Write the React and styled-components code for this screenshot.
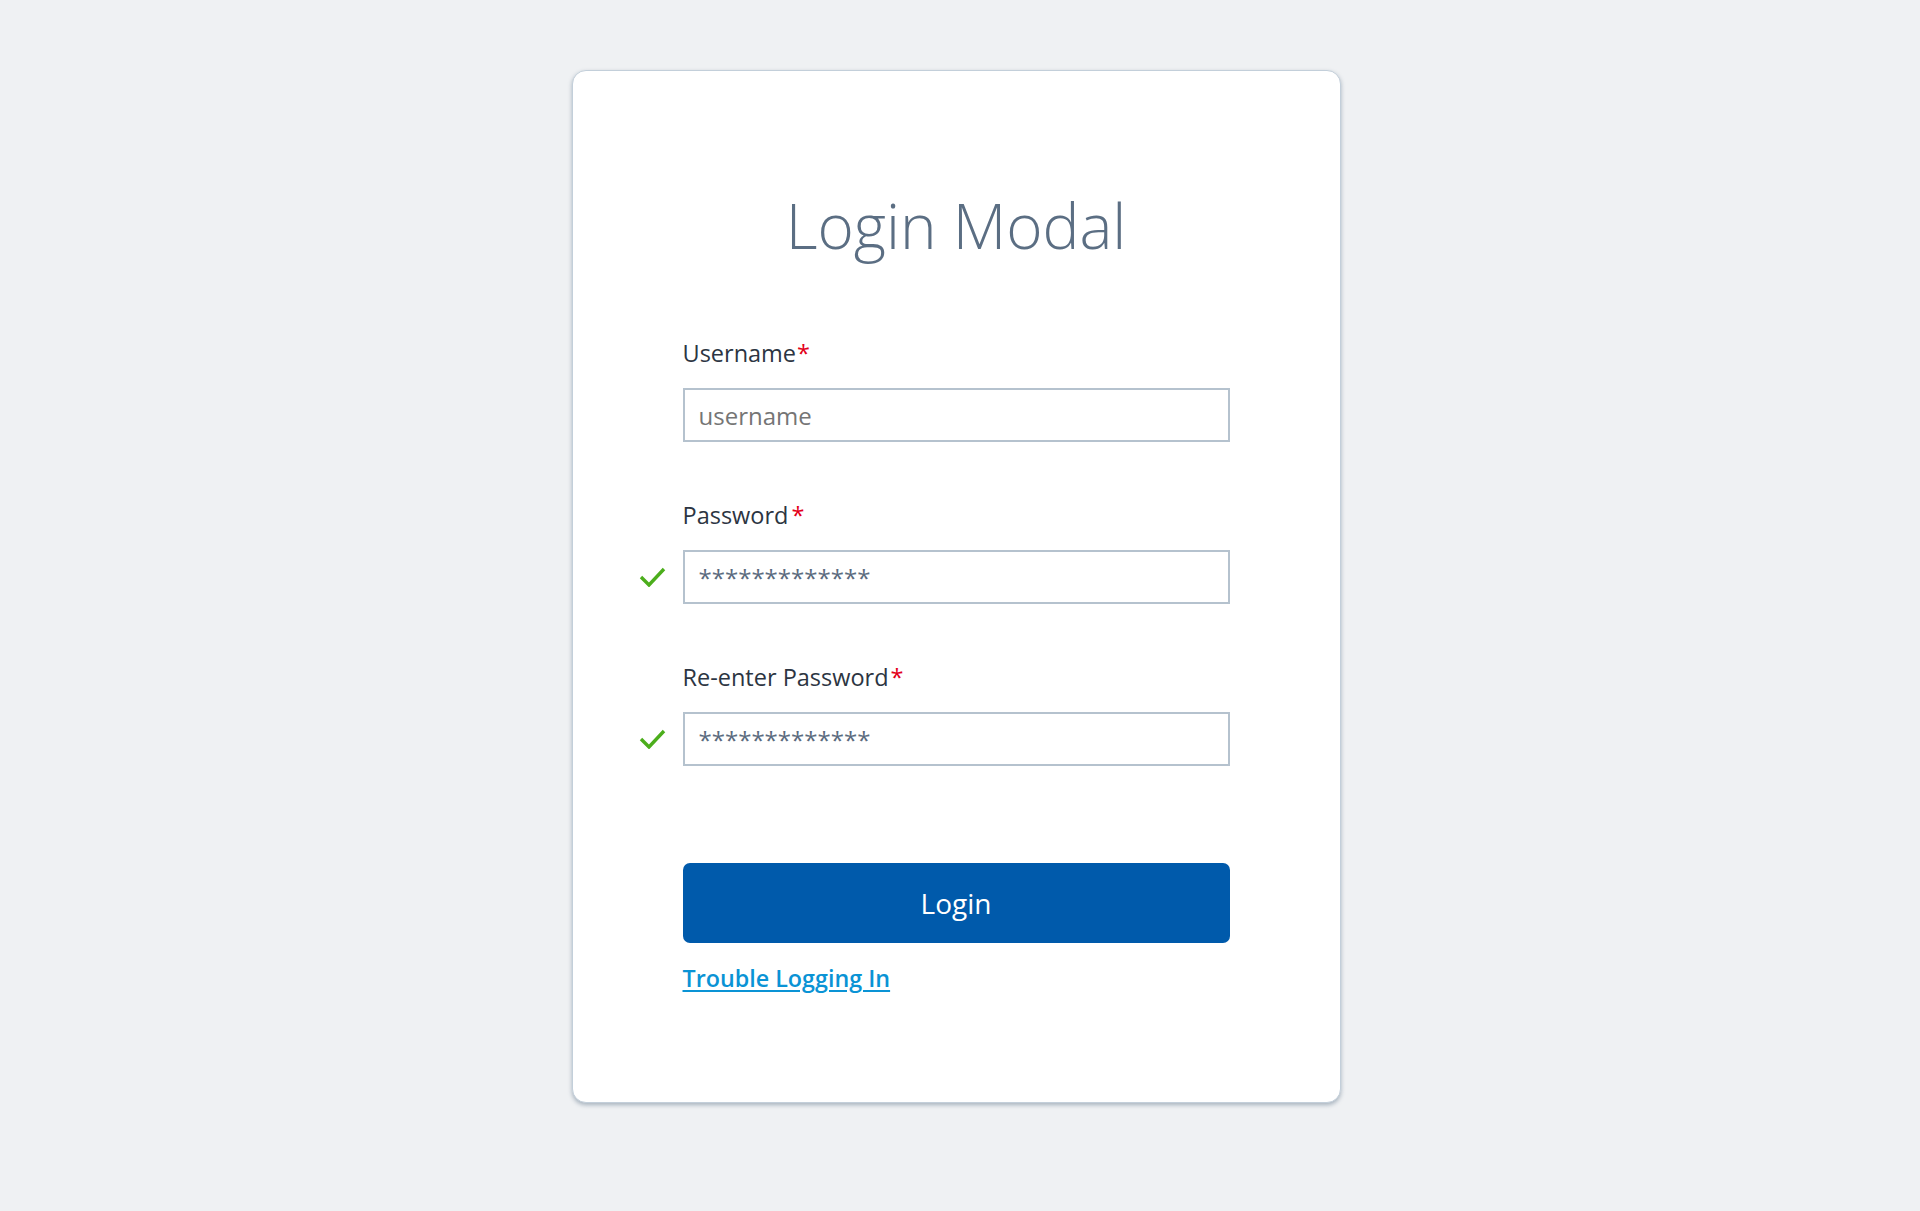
import React from 'react';
import styled, { createGlobalStyle } from 'styled-components';

const GlobalStyle = createGlobalStyle`
  html, body {
    margin: 0;
    padding: 0;
    background: #eff1f3;
    font-family: "Open Sans", "Noto Sans", sans-serif;
  }
`;

const Page = styled.div`
  display: flex;
  justify-content: center;
  align-items: flex-start;
  padding: 70px 8px 0 0;
  min-height: 1211px;
  box-sizing: border-box;
`;

const Card = styled.div`
  width: 769px;
  box-sizing: border-box;
  padding: 123px 110px 108px;
  background: #fff;
  border: 1px solid #c3cfda;
  border-radius: 14px;
  box-shadow: 0 2px 4px rgba(60, 85, 110, 0.4);
`;

const Title = styled.h1`
  margin: 0 0 81px;
  font-size: 62px;
  line-height: 62px;
  font-weight: 300;
  color: #5b6e83;
  text-align: center;
`;

const Form = styled.form`
  display: flex;
  flex-direction: column;
  gap: 57px;
`;

const Field = styled.div`
  display: flex;
  flex-direction: column;
  gap: 19px;
`;

const Label = styled.label`
  font-size: 23.5px;
  line-height: 32px;
  color: #2c3542;
`;

const Required = styled.span`
  color: #e3001b;
  margin-left: ${p => p.$gap}px;
`;

const InputWrap = styled.div`
  position: relative;
`;

const Input = styled.input`
  display: block;
  width: 100%;
  height: 54px;
  box-sizing: border-box;
  border: 2px solid #b5c2ce;
  border-radius: 0;
  padding: 0 14px;
  font-family: inherit;
  font-size: 24px;
  color: #5b6b7e;
  background: #fff;
  outline: none;

  ::placeholder {
    color: #5a6d83;
    opacity: 1;
  }
`;

const Check = styled.svg`
  position: absolute;
  left: -44px;
  top: 50%;
  width: 27px;
  height: 20px;
  margin-top: -10px;
`;

const Actions = styled.div`
  display: flex;
  flex-direction: column;
  gap: 19px;
  margin-top: 97px;
`;

const Button = styled.button`
  height: 80px;
  border: none;
  border-radius: 7px;
  background: #005aab;
  color: #fff;
  font-family: inherit;
  font-size: 28px;
  cursor: pointer;
`;

const Link = styled.a`
  align-self: flex-start;
  font-size: 23.3px;
  line-height: 32px;
  font-weight: 600;
  color: #0a93d5;
  text-decoration: underline;
  text-underline-offset: 3px;
  cursor: pointer;
`;

const CheckIcon = () => (
  <Check viewBox="0 0 27 20">
    <path d="M2 10 L10 18 L25 2" fill="none" stroke="#4cae1c" strokeWidth="3.4" />
  </Check>
);

const TextField = ({ label, gap, value, placeholder, valid }) => (
  <Field>
    <Label>
      {label}
      <Required $gap={gap}>*</Required>
    </Label>
    <InputWrap>
      {valid && <CheckIcon />}
      <Input defaultValue={value} placeholder={placeholder} readOnly />
    </InputWrap>
  </Field>
);

const App = () => (
  <>
    <GlobalStyle />
    <Page>
      <Card>
        <Title>Login Modal</Title>
        <Form onSubmit={e => e.preventDefault()}>
          <TextField label="Username" gap={1} placeholder="username" />
          <TextField label="Password" gap={3} value="*************" valid />
          <TextField label="Re-enter Password" gap={2} value="*************" valid />
        </Form>
        <Actions>
          <Button type="button">Login</Button>
          <Link>Trouble Logging In</Link>
        </Actions>
      </Card>
    </Page>
  </>
);

export default App;
